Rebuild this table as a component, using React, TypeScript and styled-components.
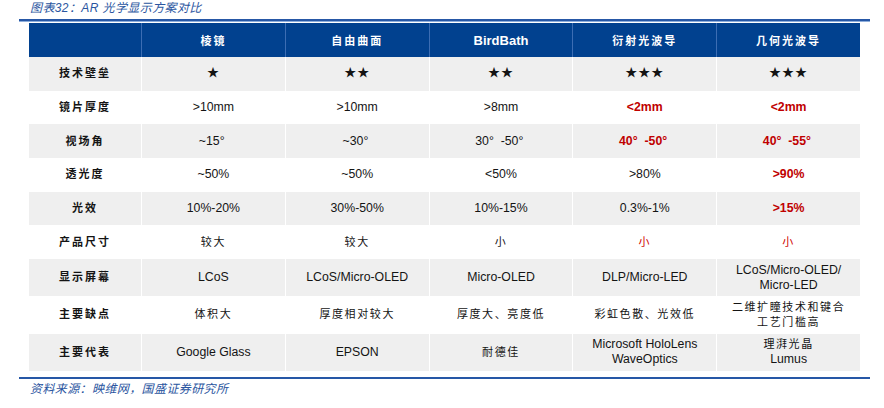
import { Fragment } from 'react'
import styled, { createGlobalStyle, css } from 'styled-components'

const GlobalStyle = createGlobalStyle`
  body {
    margin: 0;
    background: #ffffff;
  }
`

const CJK = `"Liberation Sans", "Noto Sans CJK SC", sans-serif`

const Page = styled.div`
  display: flex;
  flex-direction: column;
  width: 851px;
  padding-left: 19px;
  font-family: ${CJK};
`

const Caption = styled.div`
  height: 18px;
  padding: 1px 0 0 11px;
  line-height: 14px;
  font-size: 12px;
  font-style: italic;
  color: #2a55a0;
  letter-spacing: 0.4px;
`

const Rule = styled.div<{ $double?: boolean }>`
  height: 0;
  border-top: 2px solid #2657a6;
  ${({ $double }) =>
    $double &&
    css`
      border-bottom: 1px solid #8eaedb;
    `}
`

const Table = styled.div`
  display: grid;
  width: 831px;
  margin: 1px 0 0 10px;
  grid-template-columns: 112px repeat(5, 1fr);
  grid-template-rows: 34px repeat(6, 33.67px) repeat(3, 37.33px);
`

const Cell = styled.div<{ $shade: boolean; $first?: boolean }>`
  display: flex;
  align-items: center;
  justify-content: center;
  text-align: center;
  white-space: pre;
  border-left: ${({ $first }) => ($first ? '0' : '1px solid #ffffff')};
  background: ${({ $shade }) => ($shade ? '#efefef' : '#ffffff')};
  color: #141414;
  font-size: 12.3px;
  line-height: 15px;
`

const HeadCell = styled.div<{ $first?: boolean }>`
  display: flex;
  align-items: center;
  justify-content: center;
  background: #01418f;
  border-left: ${({ $first }) => ($first ? '0' : '1px solid #3c6db3')};
  color: #ffffff;
  font-size: 11px;
  font-weight: 700;
  letter-spacing: 2px;
`

const HeadLatin = styled.span`
  font-size: 13px;
  letter-spacing: 0;
`

const Label = styled.span`
  font-size: 11px;
  font-weight: 700;
  letter-spacing: 2px;
`

const Han = styled.span<{ $red?: boolean }>`
  font-size: 11px;
  letter-spacing: 1.6px;
  color: ${({ $red }) => ($red ? '#d00000' : 'inherit')};
`

const Hot = styled.span`
  color: #c00000;
  font-weight: 700;
`

const Stars = styled.span`
  font-size: 12px;
  letter-spacing: 1px;
`

const Source = styled.div`
  margin-top: 3px;
  padding-left: 11px;
  line-height: 14px;
  font-size: 12px;
  font-style: italic;
  color: #2a55a0;
  letter-spacing: 0.4px;
`

type Val = { t: string; kind?: 'han' | 'hot' | 'hanRed' | 'star' }

const headers: Val[] = [
  { t: '棱镜', kind: 'han' },
  { t: '自由曲面', kind: 'han' },
  { t: 'BirdBath' },
  { t: '衍射光波导', kind: 'han' },
  { t: '几何光波导', kind: 'han' },
]

const rows: { label: string; cells: Val[] }[] = [
  {
    label: '技术壁垒',
    cells: [
      { t: '★', kind: 'star' },
      { t: '★★', kind: 'star' },
      { t: '★★', kind: 'star' },
      { t: '★★★', kind: 'star' },
      { t: '★★★', kind: 'star' },
    ],
  },
  {
    label: '镜片厚度',
    cells: [{ t: '>10mm' }, { t: '>10mm' }, { t: '>8mm' }, { t: '<2mm', kind: 'hot' }, { t: '<2mm', kind: 'hot' }],
  },
  {
    label: '视场角',
    cells: [
      { t: '~15° ' },
      { t: '~30° ' },
      { t: '30°  -50° ' },
      { t: '40°  -50° ', kind: 'hot' },
      { t: '40°  -55° ', kind: 'hot' },
    ],
  },
  {
    label: '透光度',
    cells: [{ t: '~50%' }, { t: '~50%' }, { t: '<50%' }, { t: '>80%' }, { t: '>90%', kind: 'hot' }],
  },
  {
    label: '光效',
    cells: [{ t: '10%-20%' }, { t: '30%-50%' }, { t: '10%-15%' }, { t: '0.3%-1%' }, { t: '>15%', kind: 'hot' }],
  },
  {
    label: '产品尺寸',
    cells: [
      { t: '较大', kind: 'han' },
      { t: '较大', kind: 'han' },
      { t: '小', kind: 'han' },
      { t: '小', kind: 'hanRed' },
      { t: '小', kind: 'hanRed' },
    ],
  },
  {
    label: '显示屏幕',
    cells: [{ t: 'LCoS' }, { t: 'LCoS/Micro-OLED' }, { t: 'Micro-OLED' }, { t: 'DLP/Micro-LED' }, { t: 'LCoS/Micro-OLED/\nMicro-LED' }],
  },
  {
    label: '主要缺点',
    cells: [
      { t: '体积大', kind: 'han' },
      { t: '厚度相对较大', kind: 'han' },
      { t: '厚度大、亮度低', kind: 'han' },
      { t: '彩虹色散、光效低', kind: 'han' },
      { t: '二维扩瞳技术和键合\n工艺门槛高', kind: 'han' },
    ],
  },
  {
    label: '主要代表',
    cells: [
      { t: 'Google Glass' },
      { t: 'EPSON' },
      { t: '耐德佳', kind: 'han' },
      { t: 'Microsoft HoloLens\nWaveOptics' },
      { t: '理湃光晶\nLumus', kind: 'han' },
    ],
  },
]

// 多行文字按换行拆开
const lines = (t: string) =>
  t.split('\n').map((l, i) => (
    <Fragment key={i}>
      {i > 0 && <br />}
      {l}
    </Fragment>
  ))

const renderVal = (v: Val) => {
  if (v.kind === 'star') return <Stars>{v.t}</Stars>
  if (v.kind === 'hot') return <Hot>{v.t}</Hot>
  if (v.kind === 'hanRed') return <Han $red>{v.t}</Han>
  if (v.kind === 'han') {
    // 中文与英文混排：英文行不加字距
    const parts = v.t.split('\n')
    return (
      <span>
        {parts.map((p, i) => (
          <Fragment key={i}>
            {i > 0 && <br />}
            {/[A-Za-z]/.test(p) ? p : <Han>{p}</Han>}
          </Fragment>
        ))}
      </span>
    )
  }
  return <span>{lines(v.t)}</span>
}

export default function App() {
  return (
    <>
      <GlobalStyle />
      <Page>
        <Caption>图表32：AR 光学显示方案对比</Caption>
        <Rule $double />
        <Table>
          <HeadCell $first />
          {headers.map((h) => (
            <HeadCell key={h.t}>{h.kind === 'han' ? h.t : <HeadLatin>{h.t}</HeadLatin>}</HeadCell>
          ))}
          {rows.map((r, ri) => (
            <Fragment key={r.label}>
              <Cell $shade={ri % 2 === 0} $first>
                <Label>{r.label}</Label>
              </Cell>
              {r.cells.map((c, ci) => (
                <Cell key={ci} $shade={ri % 2 === 0}>
                  {renderVal(c)}
                </Cell>
              ))}
            </Fragment>
          ))}
        </Table>
        <Rule style={{ marginTop: 6 }} />
        <Source>资料来源：映维网，国盛证券研究所</Source>
      </Page>
    </>
  )
}
